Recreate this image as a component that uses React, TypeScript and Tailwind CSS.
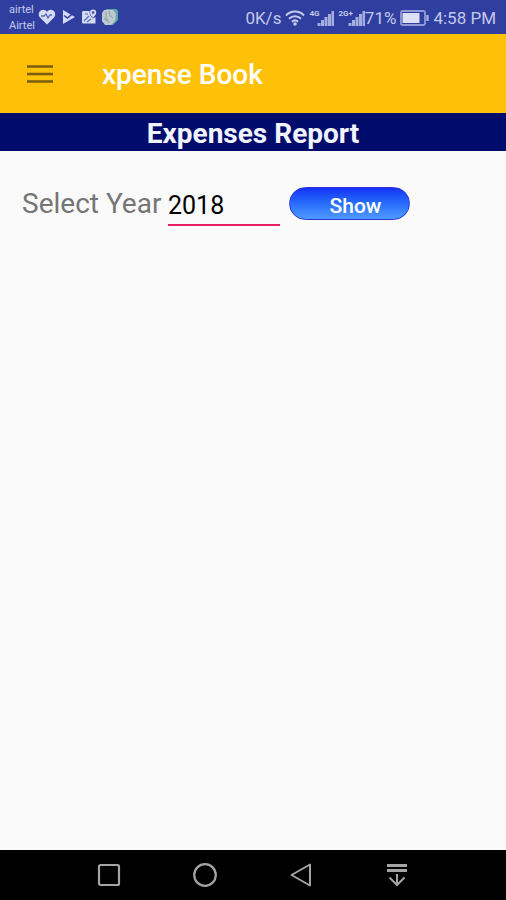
import { useState } from "react";

const StatusBar = () => (
  <div className="flex h-[34px] items-center justify-between bg-[#303f9f] pl-[9px] pr-[10px] text-[#c3c9ec]">
    <div className="flex items-center">
      <div className="w-[29px] pt-[2px] text-[11px] leading-4">
        <p>airtel</p>
        <p>Airtel</p>
      </div>
      <svg width="18" height="16" viewBox="0 0 18 16" aria-hidden="true">
        <path
          d="M9 15.500 2.200 8.800C.2 6.700.4 3.300 2.400 1.700 4.500 0 7.500.5 9 2.700 10.500.5 13.500 0 15.600 1.700 17.600 3.300 17.800 6.700 15.800 8.800Z"
          fill="#d5daf5"
        />
        <path d="M3 7h3l2-2 2 4 2-3h2" fill="none" stroke="#5b68b8" strokeWidth="1.300" />
      </svg>
      <svg className="ml-[6px]" width="14" height="14" viewBox="0 0 14 14" aria-hidden="true">
        <path d="M1 0 13 7 1 14Z" fill="#d5daf5" />
        <path d="M2 5.500 5.500 8 12 2.500" fill="none" stroke="#303f9f" strokeWidth="1.500" />
      </svg>
      <svg className="ml-[6px]" width="15" height="16" viewBox="0 0 15 16" aria-hidden="true">
        <path
          d="M1.500 2H7.500C7.500 6 9 8 11 9.500L13.500 8V14.500H1.500C.7 14.500 0 14 0 13V3.500C0 2.500.7 2 1.500 2Z"
          fill="#d5daf5"
        />
        <path d="M2 12 7 7M3 5h3M5 13l4-3" stroke="#5b68b8" strokeWidth="1.200" />
        <path d="M11 9C9 6.500 8 5 8 3.500a3 3 0 0 1 6.200 0C14.200 5 13 6.500 11 9Z" fill="#d5daf5" />
        <circle cx="11.100" cy="3.500" r="1.200" fill="#303f9f" />
      </svg>
      <svg className="ml-1" width="18" height="18" viewBox="0 0 18 18" aria-hidden="true">
        <path d="M5 1h9a3 3 0 0 1 3 3v8l-5 5H7L3 12Z" fill="#5fa9a6" />
        <path d="M3 2h9l3 4-1 7-4 4H4l-3-4V5Z" fill="#bfc9cf" />
        <path d="M5 4v5l3 6M8 3l1 5 3 2M3 10l3 3" fill="none" stroke="#93a7b3" strokeWidth="1.200" />
      </svg>
    </div>

    <div className="flex items-center pt-[2px] text-[17px] leading-none">
      <span>0K/s</span>
      <svg className="ml-1" width="20" height="16" viewBox="0 0 20 16" aria-hidden="true">
        <g fill="none" stroke="#c3c9ec" strokeWidth="2">
          <path d="M1 5.500C6 .3 14 .3 19 5.500" />
          <path d="M4 8.700c3.500-3.400 8.500-3.400 12 0" />
          <path d="M7 11.700c2-1.800 4-1.800 6 0" />
        </g>
        <circle cx="10" cy="14" r="1.800" fill="#c3c9ec" />
      </svg>
      <div className="ml-1 flex items-start">
        <span className="-mr-[2px] text-[8px] font-bold leading-[8px]">4G</span>
        <SignalBars />
      </div>
      <div className="ml-1 flex items-start">
        <span className="-mr-[5px] text-[8px] font-bold leading-[8px]">2G+</span>
        <SignalBars />
      </div>
      <span>71%</span>
      <svg className="ml-1" width="29" height="16" viewBox="0 0 29 16" aria-hidden="true">
        <rect x="1" y="1" width="24" height="14" rx="1.500" fill="none" stroke="#8f9ad6" strokeWidth="1.800" />
        <rect x="2.500" y="3" width="17" height="10" fill="#dcdff5" />
        <path d="M27.500 5v6" stroke="#a7b0e2" strokeWidth="2.400" />
      </svg>
      <span className="ml-1">4:58 PM</span>
    </div>
  </div>
);

const SignalBars = () => (
  <svg width="17" height="16" viewBox="0 0 17 16" aria-hidden="true">
    <path d="M2 16v-3M5.500 16v-6M9 16V7M12.500 16V4M16 16V1" stroke="#a4aedf" strokeWidth="3" />
  </svg>
);

const NavBar = () => (
  <nav className="flex h-[50px] items-center justify-center gap-[72px] bg-black">
    <button type="button" aria-label="Recent apps">
      <svg width="24" height="24" viewBox="0 0 24 24" fill="none" stroke="#a6a3a3" strokeWidth="2.200">
        <rect x="2" y="2" width="20" height="20" rx="1.500" />
      </svg>
    </button>
    <button type="button" aria-label="Home">
      <svg width="24" height="24" viewBox="0 0 24 24" fill="none" stroke="#a6a3a3" strokeWidth="2.200">
        <circle cx="12" cy="12" r="10.800" />
      </svg>
    </button>
    <button type="button" aria-label="Back">
      <svg width="24" height="24" viewBox="0 0 24 24" fill="none" stroke="#a6a3a3" strokeWidth="2">
        <path d="M21 1.500v21L2.500 12Z" strokeLinejoin="round" />
      </svg>
    </button>
    <button type="button" aria-label="Notifications">
      <svg width="24" height="24" viewBox="0 0 24 24" fill="none" stroke="#a6a3a3">
        <path d="M2 2.500h20M2 7.500h20" strokeWidth="2.800" />
        <path d="M12 11v10.500M4.500 14.500 12 22l7.500-7.500" strokeWidth="2" />
      </svg>
    </button>
  </nav>
);

export default function App() {
  const [year, setYear] = useState("2018");

  return (
    <div className="flex min-h-screen flex-col bg-[#fafafa] font-['Roboto',sans-serif]">
      <StatusBar />

      <header className="flex h-[79px] items-center bg-[#ffc107] pl-[27px]">
        <button type="button" aria-label="Open menu">
          <svg width="26" height="20" viewBox="0 0 26 20" stroke="#7a5d0b" strokeWidth="2.500">
            <path d="M0 2.500h26M0 10h26M0 17.500h26" />
          </svg>
        </button>
        <h1 className="ml-[49px] pt-[2px] text-[28px] font-medium leading-8 text-white">xpense Book</h1>
      </header>

      <h2 className="h-[38px] bg-[#000c6b] text-center text-[28px] font-bold leading-[42px] text-[#f1f3ff]">
        Expenses Report
      </h2>

      <main className="flex-1 px-[22px] pt-[34px]">
        <form className="flex items-start" onSubmit={(e) => e.preventDefault()}>
          <label htmlFor="year" className="w-[146px] whitespace-nowrap text-[28px] leading-[38px] text-[#757575]">
            Select Year
          </label>
          <input
            id="year"
            value={year}
            onChange={(e) => setYear(e.target.value)}
            className="h-[41px] w-28 border-b-2 border-[#e91e63] pt-[2px] text-[25px] text-black outline-none"
          />
          <button
            type="submit"
            className="ml-[9px] mt-[2px] h-[33px] w-[121px] rounded-full border border-[#2a35d8] bg-linear-to-b from-[#1a2cf5] to-[#509bff] pl-3 pt-1 text-[21px] font-medium leading-6 text-white"
          >
            Show
          </button>
        </form>
      </main>

      <NavBar />
    </div>
  );
}
